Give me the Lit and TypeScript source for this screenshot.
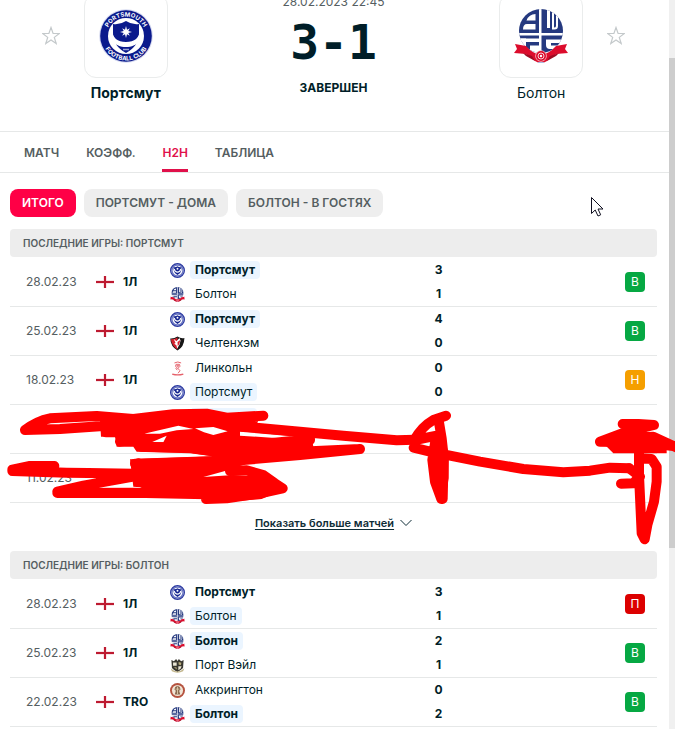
import { LitElement, html, css, svg, nothing } from "lit";
import { customElement, property, state } from "lit/decorators.js";
import { classMap } from "lit/directives/class-map.js";

type Side = { club: string; name: string; goals: string; mine?: boolean; win?: boolean };
type Game = { date: string; league: string; home?: Side; away?: Side; result?: string };

const side = (club: string, name: string, goals: string, mine = false, win = false): Side => ({ club, name, goals, mine, win });

const portsmouth: Game[] = [
  { date: "28.02.23", league: "1Л", home: side("por", "Портсмут", "3", true, true), away: side("bol", "Болтон", "1"), result: "В" },
  { date: "25.02.23", league: "1Л", home: side("por", "Портсмут", "4", true, true), away: side("che", "Челтенхэм", "0"), result: "В" },
  { date: "18.02.23", league: "1Л", home: side("lin", "Линкольн", "0"), away: side("por", "Портсмут", "0", true), result: "Н" },
  { date: "", league: "", home: side("", "Портсмут", "", true) },
  { date: "11.02.23", league: "1Л" },
];

const bolton: Game[] = [
  { date: "28.02.23", league: "1Л", home: side("por", "Портсмут", "3", false, true), away: side("bol", "Болтон", "1", true), result: "П" },
  { date: "25.02.23", league: "1Л", home: side("bol", "Болтон", "2", true, true), away: side("val", "Порт Вэйл", "1"), result: "В" },
  { date: "22.02.23", league: "TRO", home: side("acc", "Аккрингтон", "0"), away: side("bol", "Болтон", "2", true, true), result: "В" },
];

const portsmouthArt = svg`
  <circle cx="27" cy="27" r="26.800" fill="#d5d9f0"/>
  <circle cx="27" cy="27" r="25.800" fill="#0b1a8c"/>
  <circle cx="27" cy="27" r="18" fill="#fff"/>
  <path d="M14 15q7 1 13-3 6 4 13 3v9q0 13-13 20-13-7-13-20z" fill="#0b1a8c"/>
  <path d="M12.500 20c1 9 6 13 14.500 13s13.500-4 14.500-13c4 10-3 18-14.500 18s-18.500-8-14.500-18z" fill="#fff"/>
  <path d="M27 17l1 3.700 2.800-1.500-1.500 2.800 3.700 1-3.700 1 1.500 2.800-2.800-1.500-1 3.700-1-3.700-2.800 1.500 1.500-2.800-3.700-1 3.700-1-1.500-2.800 2.800 1.500z" fill="#fff"/>
  <path d="M24 40.500h6" stroke="#9aa3d8" stroke-width="1.500"/>`;

const boltonArt = svg`
  <defs><clipPath id="disc"><circle cx="27" cy="22" r="22"/></clipPath></defs>
  <g clip-path="url(#disc)">
    <rect x="5" y="0" width="44" height="44" fill="#25397f"/>
    <path d="M25 0h2.500v44H25zM4 24h46v2.500H4z" fill="#fff"/>
    <path d="M21.500 5v6.500H12.500Q15 5 21.500 5zM21.500 15v5.500H9q0-5.500 4-5.500z" fill="#fff"/>
    <path d="M31 0h2v19h3V0h2v20.500h2.500q3.500 0 3.500-3.500V6h-2v11q0 1.500-2 1.500V3h2v0z" fill="#fff"/>
    <path d="M6 29.500h19V33H6zM16 36.500h9V44h-9zM32 30.500h17V40H36q-4 0-4-4z" fill="#fff"/>
    <path d="M6 29.500h6V44H6z" fill="#fff"/>
    <path d="M37 34h12v2.500H37z" fill="#25397f"/>
  </g>
  <path d="M1 35l11 2q7 8 15 9 8-1 15-9l11-2-2 5 3 4-12 1-9 7q-6 4-12 0l-9-7-12-1 3-4z" fill="#dc0c2c"/>
  <path d="M9 44l9 3 3 5-9-5zM45 44l-9 3-3 5 9-5z" fill="#9e0b22"/>
  <circle cx="27" cy="47" r="5.800" fill="#f6b6be"/><circle cx="27" cy="47" r="5" fill="#dc0c2c"/>
  <circle cx="27" cy="47" r="3" fill="none" stroke="#fff" stroke-width=".8"/><circle cx="27" cy="47" r="1.200" fill="#fff"/>
  <path d="M24 54h6" stroke="#aab4dc" stroke-width="2"/>`;

const cheltenhamArt = svg`
  <path d="M1 9q14 1 26-7 12 8 25 5-1 32-25 45Q2 38 1 9z" fill="#161616"/>
  <path d="M3 12q13 0 24-7v44Q6 36 3 12z" fill="#d3202c"/>
  <path d="M13 10l10 9 11-12 4 9-3 14-9 15-3-12-8-5 5-3z" fill="#fff"/>
  <path d="M27 22l10-8-3 14-6 9z" fill="#d3202c"/>`;

const lincolnArt = svg`
  <g fill="none" stroke="#e5606a" stroke-width="3.500">
    <path d="M16 7q12-7 24 0M22 12h12l2 7-8 8-8-8zM28 26l8 9-7 9M20 25l6 8"/>
    <path d="M8 47q20 6 40 0" stroke-width="5"/>
  </g><circle cx="28" cy="17" r="5" fill="#e98790"/>`;

const valeArt = svg`
  <path d="M5 7l9 5 8-8 5 7 5-7 8 8 9-5-2 29q-9 9-20 14Q14 45 7 36z" fill="#39372f"/>
  <path d="M11 16h13v12H11zM30 30h12l-4 9-8 5z" fill="#e9e5d4"/>
  <path d="M31 14l10 3-2 9-8-3zM14 32l10 2v7z" fill="#b7ab7c"/>
  <path d="M2 37q25 23 50 0l-5 11q-20 10-40 0z" fill="#c1b58a"/>`;

const accringtonArt = svg`
  <circle cx="27" cy="27" r="27" fill="#b5523f"/><circle cx="27" cy="27" r="20" fill="#f0e5d6"/>
  <path d="M19 14l8-4 8 4 3 9-5 5 4 13H17l4-13-5-5z" fill="#8a6a50"/>
  <path d="M27 13v27M20 22h14" stroke="#e3cfae" stroke-width="3"/>`;

const smallPortsmouthArt = svg`
  <circle cx="27" cy="27" r="24.500" fill="#fff" stroke="#2a389f" stroke-width="5"/>
  <circle cx="27" cy="27" r="20" fill="none" stroke="#6a76c2" stroke-width="5"/>
  <path d="M13 15q8 1 14-3 6 4 14 3v10q-2 12-14 18-12-6-14-18z" fill="#14248f"/>
  <path d="M15 21q3 12 12 12t12-12" fill="none" stroke="#fff" stroke-width="4"/>
  <circle cx="27" cy="21" r="3.500" fill="#fff"/>`;

const art: Record<string, unknown> = {
  por: smallPortsmouthArt, bol: boltonArt, che: cheltenhamArt, lin: lincolnArt, val: valeArt, acc: accringtonArt,
};

@customElement("club-crest")
class ClubCrest extends LitElement {
  @property() club = "";
  @property({ type: Boolean }) lettered = false;
  static styles = css`
    :host { display: block; width: 15px; height: 15px; flex: none; }
    .crest { display: block; width: 100%; height: 100%; }
    .ring { font: 700 6px "Inter", sans-serif; fill: #fff; }
  `;
  render() {
    return html`<svg class="crest" viewBox="0 0 54 54" aria-hidden="true">
      ${this.lettered ? svg`
        ${portsmouthArt}
        <defs>
          <path id="over" d="M7.500 32A20 20 0 1 1 46.500 32"/>
          <path id="under" d="M3 31A24.300 24.300 0 0 0 51 31"/>
        </defs>
        <text class="ring" text-anchor="middle"><textPath href="#over" startOffset="50%">PORTSMOUTH</textPath></text>
        <text class="ring" text-anchor="middle"><textPath href="#under" startOffset="50%">FOOTBALL CLUB</textPath></text>`
        : art[this.club] ?? nothing}
    </svg>`;
  }
}

@customElement("game-list")
class GameList extends LitElement {
  @property() heading = "";
  @property({ attribute: false }) games: Game[] = [];
  static styles = css`
    :host { display: block; }
    .games { width: 100%; border-collapse: separate; border-spacing: 0; table-layout: fixed; }
    .heading { box-sizing: border-box; height: 28px; margin-bottom: 1px; padding: 0 13px; border-radius: 4px; background: #ededed;
      color: #555e61; font-size: 10px; font-weight: 600; line-height: 29px; text-align: left; }
    .date { width: 86px; }
    .league { width: 74px; }
    .teams { width: 39%; }
    .score { width: 5%; }
    .cell { height: 48px; padding: 0; border-bottom: 1px solid #e6e8e8; vertical-align: middle; }
    .cell.day { padding-left: 16px; color: #555e61; }
    .tag { display: flex; align-items: center; gap: 9px; font-weight: 700; }
    .flag { flex: none; width: 18px; height: 12px; }
    .stack { display: grid; grid-template-rows: 24px 24px; align-items: center; }
    .team { display: flex; align-items: center; gap: 5px; }
    .name { height: 18px; padding: 0 5px; border-radius: 4px; line-height: 18px; }
    .mine { background: #ebf5ff; }
    .win { font-weight: 700; }
    .goals { text-align: center; font-weight: 700; }
    .end { padding-right: 12px; }
    .badge { display: block; width: 20px; height: 20px; margin-left: auto; border-radius: 4px; background: #06a843;
      color: #fff; font-weight: 400; line-height: 20px; text-align: center; }
    .draw { background: #f59f00; }
    .loss { background: #dc0000; }
  `;
  private team(s?: Side) {
    return s ? html`<div class="team"><club-crest .club=${s.club}></club-crest>
      <span class=${classMap({ name: true, mine: !!s.mine, win: !!s.win })}>${s.name}</span></div>` : html`<div></div>`;
  }
  render() {
    return html`<table class="games">
      <caption class="heading">${this.heading}</caption>
      <colgroup><col class="date"><col class="league"><col class="teams"><col class="score"><col></colgroup>
      <tbody>${this.games.map((g) => html`<tr>
        <td class="cell day">${g.date}</td>
        <td class="cell">${g.league ? html`<span class="tag"><svg class="flag" viewBox="0 0 18 12" aria-hidden="true">
          <path d="M0 6h18M9 0v12" stroke="#f6c9cf" stroke-width="3"/><path d="M0 6h18M9 0v12" stroke="#bd1a30" stroke-width="2"/></svg>${g.league}</span>` : nothing}</td>
        <td class="cell"><div class="stack">${this.team(g.home)}${this.team(g.away)}</div></td>
        <td class="cell"><div class="stack goals"><span>${g.home?.goals}</span><span>${g.away?.goals}</span></div></td>
        <td class="cell end">${g.result ? html`<span class=${classMap({ badge: true, draw: g.result === "Н", loss: g.result === "П" })}>${g.result}</span>` : nothing}</td>
      </tr>`)}</tbody>
    </table>`;
  }
}

@customElement("app-root")
class AppRoot extends LitElement {
  @state() private filter = 0;
  static styles = css`
    :host { position: relative; display: grid; grid-template-columns: minmax(0, 1fr) 6px; height: 100vh; overflow: hidden;
      background: #fff; color: #001e28; font: 400 12px/16px "Inter", "Noto Sans", sans-serif; }
    .page { min-width: 0; }
    .match { display: grid; grid-template-columns: repeat(3, minmax(0, 1fr)); margin-top: -6px; padding: 0 24px 28px 22px;
      border-bottom: 1px solid #e6e8e8; }
    .side { display: grid; grid-template-columns: minmax(0, 1fr) 84px minmax(0, 1fr); row-gap: 5px; }
    .logo { display: grid; place-items: center; box-sizing: border-box; height: 84px; border: 1px solid #eaecec; border-radius: 12px; grid-column: 2; grid-row: 1; }
    .big { width: 54px; height: 54px; }
    .club { grid-column: 1 / -1; text-align: center; font-size: 14px; line-height: 20px; }
    .winner { font-weight: 700; }
    .star { grid-row: 1; grid-column: 3; align-self: center; justify-self: start; margin: 0 0 0 24px; padding: 0; border: 0; background: none; height: 20px; width: 18px; }
    .star.first { grid-column: 1; justify-self: end; margin: 0 24px 0 0; }
    .icon { display: block; width: 100%; height: 100%; }
    .result { text-align: center; }
    .when { color: #555e61; }
    .score { font: 700 48px/56px "DejaVu Sans Mono", monospace; margin-top: 4px; }
    .status { margin-top: 10px; font-weight: 700; }
    .tabs { display: flex; gap: 27px; height: 40px; padding: 0 24px; border-bottom: 1px solid #e6e8e8; }
    .tab { box-sizing: border-box; height: 40px; border-bottom: 3px solid transparent; color: #555e61; font-weight: 600; line-height: 41px; text-decoration: none; }
    .tab.on { border-color: #e0104a; color: #e0104a; }
    .filters { display: flex; gap: 8px; padding: 16px 10px 12px; }
    .pill { height: 28px; padding: 0 12px; border: 0; border-radius: 8px; background: #eee; color: #555e61; font: 600 12px/28px "Inter", sans-serif; white-space: nowrap; }
    .pill.on { background: #ff0046; color: #fff; }
    .lists { padding: 0 12px 0 10px; }
    .more { display: flex; justify-content: center; align-items: center; gap: 6px; height: 40px; padding-bottom: 8px; }
    .link { color: #0f2d37; font-size: 11px; font-weight: 600; text-underline-offset: 2px; }
    .chevron { width: 12px; height: 8px; }
    .rail { background: #f0f0f0; padding-top: 58px; }
    .thumb { height: 490px; background: #cdcdcd; }
    .marks { position: absolute; left: 0; top: 405px; width: 675px; height: 145px; pointer-events: none; }
    .cursor { position: absolute; left: 591px; top: 197px; width: 13px; height: 20px; pointer-events: none; }
  `;

  private star(first: boolean, label: string) {
    return html`<button class=${classMap({ star: true, first })} aria-label=${label}>
      <svg class="icon" viewBox="0 0 18 20"><path d="M9 1.500l2.100 6h6.200l-5 3.900 1.900 6.100L9 13.900l-5.200 3.600 1.900-6.100-5-3.900h6.200z" fill="none" stroke="#c4c9cb" stroke-width="1.200"/></svg>
    </button>`;
  }

  render() {
    const filters = ["ИТОГО", "ПОРТСМУТ - ДОМА", "БОЛТОН - В ГОСТЯХ"];
    return html`
      <main class="page">
        <header class="match">
          <div class="side">${this.star(true, "Портсмут")}
            <div class="logo"><club-crest class="big" club="por" lettered></club-crest></div>
            <div class="club winner">Портсмут</div></div>
          <div class="result">
            <div class="when">28.02.2023 22:45</div>
            <div class="score">3-1</div>
            <div class="status">ЗАВЕРШЕН</div>
          </div>
          <div class="side"><div class="logo"><club-crest class="big" club="bol"></club-crest></div>
            ${this.star(false, "Болтон")}<div class="club">Болтон</div></div>
        </header>
        <nav class="tabs">${["МАТЧ", "КОЭФФ.", "H2H", "ТАБЛИЦА"].map((t) => html`<a href="#" class=${classMap({ tab: true, on: t === "H2H" })}>${t}</a>`)}</nav>
        <div class="filters">${filters.map((f, i) => html`<button class=${classMap({ pill: true, on: this.filter === i })} @click=${() => (this.filter = i)}>${f}</button>`)}</div>
        <div class="lists">
          <game-list heading="ПОСЛЕДНИЕ ИГРЫ: ПОРТСМУТ" .games=${portsmouth}></game-list>
          <div class="more"><a class="link" href="#">Показать больше матчей</a>
            <svg class="chevron" viewBox="0 0 12 8"><path d="M.5 1L6 6.500 11.500 1" fill="none" stroke="#0f2d37"/></svg></div>
          <game-list heading="ПОСЛЕДНИЕ ИГРЫ: БОЛТОН" .games=${bolton}></game-list>
        </div>
      </main>
      <div class="rail"><div class="thumb"></div></div>
      <svg class="marks" viewBox="0 0 2025 435" aria-hidden="true">
        <g fill="none" stroke="#f00" stroke-width="30" stroke-linecap="round" stroke-linejoin="round">
          <path d="M75 75Q110 48 150 40L290 33 400 42 520 28 620 26 680 38 790 32M75 75L180 72 310 63M680 50L760 45M318 82L420 80M360 110L430 100M425 125L570 128 700 125 930 103M720 64L900 80 1030 92 1190 106 1245 104M620 108L900 122M930 105L780 130 900 150M580 130L660 142 900 140 1080 132M1080 132L900 150 720 166 405 176M37 198L37 194 90 183 163 183M37 198L200 203 265 204 400 206M415 175L415 230M172 260L250 242 400 215M172 264L400 263 620 268M690 198L740 196 790 210 825 235 848 250 780 265 680 280 618 282M430 235L800 240"/>
          <path d="M1243 105Q1265 65 1300 45L1338 32M1241 128L1290 140 1440 170 1570 192 1690 202 1770 197 1830 188 1888 190M1245 105L1310 92M1315 40L1325 100 1331 155 1328 282M1305 115L1297 165 1305 230 1324 282"/>
          <path d="M1868 57L1915 57 1962 60 1880 80 1800 110 1920 112 2040 125M1850 100L1960 95 2040 132M1917 120L1917 210 1925 385 1934 403 1942 360 1962 290 1970 230 1970 185 1955 162 1920 160M1863 236L1900 235 1918 215M1888 190L1920 215"/>
        </g>
        <g fill="#f00" fill-rule="evenodd">
          <path d="M300 45L400 35 520 22 620 22 700 50 900 70 935 95 940 125 900 142 780 150 660 157 570 145 410 140 400 125 350 125 345 95 303 95ZM432 86L535 62 580 72 530 76 480 86ZM455 112L500 92 490 112ZM585 70L640 66 683 79 640 90 612 82ZM720 80L900 96 900 104 720 92Z"/>
          <path d="M390 163L740 151 770 166 700 190 675 198 610 216 700 210 800 215 860 250 785 282 665 292 615 292 585 258 400 245Z"/>
          <path d="M1302 90h30l14 60v70l-10 60h-20l-18-60-8-60zM1800 105l50-25h90l60 30v35h-160z"/>
        </g>
      </svg>
      <svg class="cursor" viewBox="0 0 13 20" aria-hidden="true"><path d="M.5.500v16l3.700-3.500 2.800 6 2.700-1.200-2.700-5.800h5z" fill="#fff" stroke="#101020"/></svg>`;
  }
}
